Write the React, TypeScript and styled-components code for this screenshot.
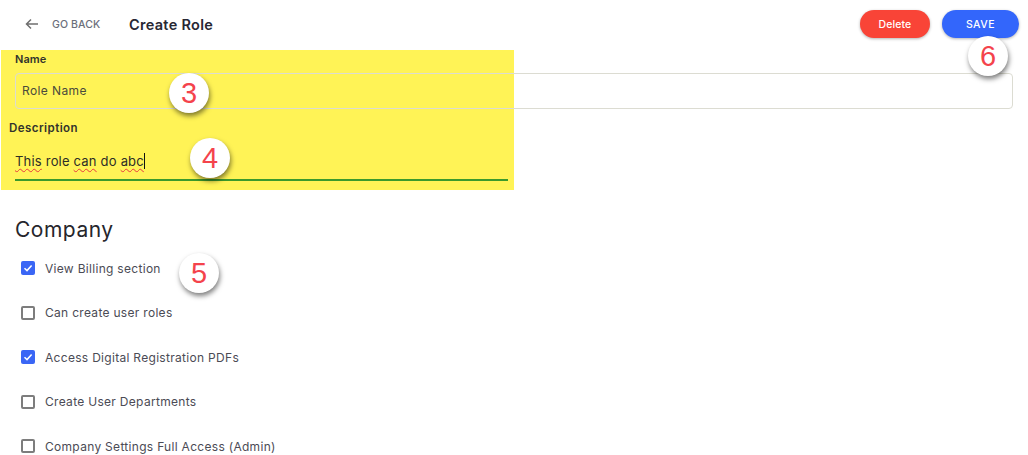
import styled, { createGlobalStyle } from "styled-components";

const GlobalStyle = createGlobalStyle`
  html, body {
    margin: 0;
    padding: 0;
    background: #fff;
    overflow: hidden;
  }
  * {
    box-sizing: border-box;
  }
`;

const Page = styled.div`
  position: relative;
  width: 1028px;
  height: 455px;
  overflow: hidden;
  font-family: Inter, "Open Sans", "Liberation Sans", sans-serif;
  color: #2c2c34;
`;

const Header = styled.div`
  height: 50px;
  display: flex;
  align-items: center;
  padding: 0 9px 2px 25px;
`;

const BackIcon = styled.svg`
  width: 14px;
  height: 12px;
  margin-right: 13px;
`;

const BackLabel = styled.span`
  font-size: 10.5px;
  font-weight: 500;
  letter-spacing: 0.1px;
  color: #6b6f7b;
  width: 77px;
  white-space: nowrap;
`;

const Title = styled.h1`
  margin: 0;
  flex: 1;
  font-size: 14.5px;
  font-weight: 600;
  letter-spacing: 0.3px;
  color: #272733;
`;

const Button = styled.button<{ $bg: string; $w: number; $size: number; $spacing: number }>`
  width: ${(p) => p.$w}px;
  height: 28px;
  margin-left: 12px;
  border: 0;
  border-radius: 14px;
  background: ${(p) => p.$bg};
  color: #fff;
  font-family: inherit;
  font-size: ${(p) => p.$size}px;
  font-weight: 500;
  letter-spacing: ${(p) => p.$spacing}px;
  box-shadow: 0 1px 3px rgba(0, 0, 0, 0.3);
`;

const Highlight = styled.div`
  position: absolute;
  left: 1px;
  top: 50px;
  width: 513px;
  height: 140px;
  background: #fff356;
`;

const Form = styled.div`
  position: relative;
  padding: 0 15px;
`;

const NameLabel = styled.div`
  height: 23px;
  padding-top: 2px;
  font-size: 11px;
  font-weight: 600;
  letter-spacing: 0.05px;
  line-height: 14px;
  color: #33332c;
`;

const NameInput = styled.div`
  width: 998px;
  height: 36px;
  padding: 0 0 1px 6px;
  display: flex;
  align-items: center;
  border: 1px solid #dcdcd2;
  border-radius: 4px;
  font-size: 12px;
  letter-spacing: 0.4px;
  color: #4a4a3c;
`;

const DescriptionLabel = styled.div`
  margin: 11px 0 0 -6px;
  font-size: 11.5px;
  font-weight: 600;
  letter-spacing: 0.45px;
  line-height: 16px;
  color: #33332c;
`;

const DescriptionInput = styled.div`
  width: 493px;
  height: 36px;
  margin-top: 9px;
  padding-bottom: 3px;
  display: flex;
  align-items: center;
  border-bottom: 2px solid #3b9a2c;
  font-size: 13px;
  letter-spacing: 0.2px;
  color: #2d2d26;
`;

const Squiggle = styled.span`
  text-decoration: underline wavy #e8393f 1px;
  text-underline-offset: 2px;
`;

const Caret = styled.span`
  display: inline-block;
  width: 1px;
  height: 16px;
  vertical-align: -3px;
  background: #111;
`;

const SectionTitle = styled.h2`
  margin: 37px 0 0;
  font-size: 21px;
  font-weight: 400;
  letter-spacing: 0.5px;
  line-height: 24px;
  color: #26262c;
`;

const List = styled.div`
  margin-top: 17px;
  padding-left: 6px;
  display: flex;
  flex-direction: column;
  gap: 26.6px;
`;

const Row = styled.label`
  height: 18px;
  display: flex;
  align-items: center;
  gap: 10px;
  font-size: 12px;
  letter-spacing: 0.3px;
  color: #4b4b55;
`;

const Box = styled.span<{ $checked: boolean }>`
  width: 14px;
  height: 14px;
  display: flex;
  align-items: center;
  justify-content: center;
  border-radius: 2px;
  background: ${(p) => (p.$checked ? "#3a66f5" : "#fff")};
  border: ${(p) => (p.$checked ? "0" : "2px solid #7d7d7d")};
`;

const Badge = styled.div<{ $x: number; $y: number }>`
  position: absolute;
  left: ${(p) => p.$x - 20}px;
  top: ${(p) => p.$y - 20}px;
  width: 40px;
  height: 40px;
  display: flex;
  align-items: center;
  justify-content: center;
  border-radius: 50%;
  background: #fff;
  box-shadow: 1px 3px 5px rgba(0, 0, 0, 0.5);
  font-family: "Liberation Sans", Arial, sans-serif;
  font-size: 29px;
  color: #f4434c;
`;

const permissions = [
  { label: "View Billing section", checked: true },
  { label: "Can create user roles", checked: false },
  { label: "Access Digital Registration PDFs", checked: true },
  { label: "Create User Departments", checked: false },
  { label: "Company Settings Full Access (Admin)", checked: false },
];

const badges = [
  { n: 3, x: 189, y: 93 },
  { n: 4, x: 210, y: 158 },
  { n: 5, x: 199, y: 273 },
  { n: 6, x: 988, y: 56 },
];

const App = () => {
  return (
    <Page>
      <GlobalStyle />
      <Highlight />
      <Header>
        <BackIcon viewBox="0 0 14 12" fill="none" stroke="#6f6f6f" strokeWidth="1.5">
          <path d="M13 6H1.5M6 1.5L1.5 6L6 10.5" />
        </BackIcon>
        <BackLabel>GO BACK</BackLabel>
        <Title>Create Role</Title>
        <Button $bg="#f94437" $w={70} $size={10.5} $spacing={0.1}>
          Delete
        </Button>
        <Button $bg="#3366fb" $w={77} $size={10.5} $spacing={0.5}>
          SAVE
        </Button>
      </Header>
      <Form>
        <NameLabel>Name</NameLabel>
        <NameInput>Role Name</NameInput>
        <DescriptionLabel>Description</DescriptionLabel>
        <DescriptionInput>
          <span>
            <Squiggle>This</Squiggle> role <Squiggle>can</Squiggle> do <Squiggle>abc</Squiggle>
            <Caret />
          </span>
        </DescriptionInput>
        <SectionTitle>Company</SectionTitle>
        <List>
          {permissions.map((item) => (
            <Row key={item.label}>
              <Box $checked={item.checked}>
                {item.checked && (
                  <svg width="10" height="10" viewBox="0 0 10 10" fill="none" stroke="#fff" strokeWidth="1.5">
                    <path d="M1.5 5.2L4 7.6L8.6 2.4" />
                  </svg>
                )}
              </Box>
              {item.label}
            </Row>
          ))}
        </List>
      </Form>
      {badges.map((b) => (
        <Badge key={b.n} $x={b.x} $y={b.y}>
          {b.n}
        </Badge>
      ))}
    </Page>
  );
};

export default App;
